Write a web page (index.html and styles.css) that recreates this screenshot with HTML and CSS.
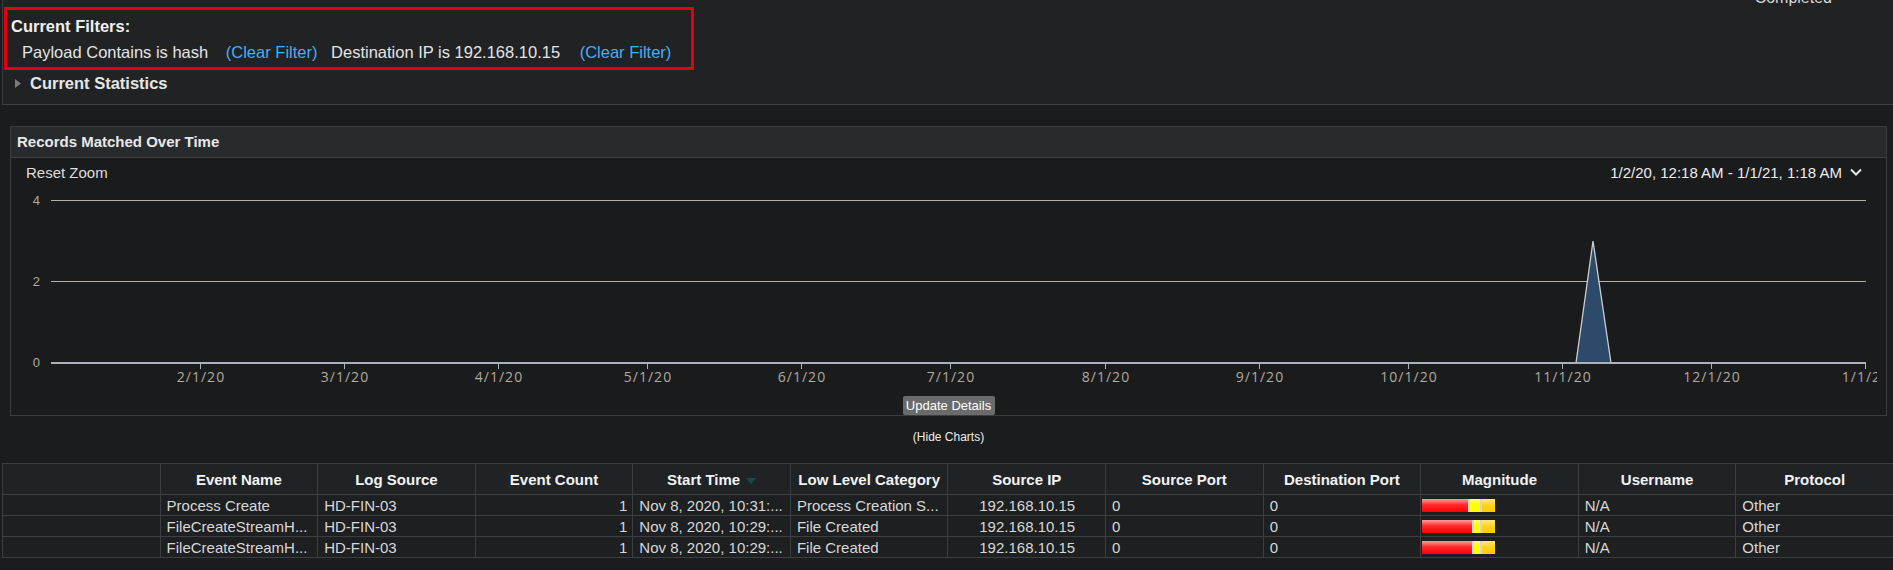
FILE: index.html
```html
<!DOCTYPE html>
<html>
<head>
<meta charset="utf-8">
<link rel="stylesheet" href="styles.css">
</head>
<body>
<div class="top-panel">
  <div class="status">Completed</div>
  <div class="filters-box">
    <div class="filters-title">Current Filters:</div>
    <div class="filters-line">
      <span class="f-text">Payload Contains is hash</span>
      <a class="clear c1">(Clear Filter)</a>
      <span class="f-text f2">Destination IP is 192.168.10.15</span>
      <a class="clear c2">(Clear Filter)</a>
    </div>
  </div>
  <div class="stats-row">
    <svg class="stats-arrow" width="6" height="9" viewBox="0 0 6 9"><polygon points="0,0 6,4.5 0,9" fill="#7c7c7c"/></svg>
    <span class="stats-title">Current Statistics</span>
  </div>
</div>

<div class="chart-panel">
  <div class="chart-header">Records Matched Over Time</div>
  <div class="chart-body">
    <div class="chart-toolbar">
      <span class="reset-zoom">Reset Zoom</span>
      <span class="range">1/2/20, 12:18 AM - 1/1/21, 1:18 AM
        <svg class="chev" width="12" height="8" viewBox="0 0 12 8"><polyline points="1,1.5 6,6.5 11,1.5" fill="none" stroke="#e6e6e6" stroke-width="2"/></svg>
      </span>
    </div>
    <svg class="plot" width="1866" height="210" viewBox="0 0 1866 210">
      <line class="grid" x1="40" y1="14.5" x2="1855" y2="14.5"/>
      <line class="grid" x1="40" y1="95.5" x2="1855" y2="95.5"/>
      <text class="ylab" x="29" y="18.5">4</text>
      <text class="ylab" x="29" y="99.5">2</text>
      <text class="ylab" x="29" y="180.5">0</text>
      <polygon points="1565,177 1582,55 1600,177" fill="#2e4a6b" stroke="#cdcdcd" stroke-width="1.3"/>
      <line class="axis" x1="40" y1="177" x2="1855" y2="177"/>
      <g class="ticks">
        <line x1="189.5" y1="178" x2="189.5" y2="183"/>
        <line x1="333.5" y1="178" x2="333.5" y2="183"/>
        <line x1="487.5" y1="178" x2="487.5" y2="183"/>
        <line x1="636.5" y1="178" x2="636.5" y2="183"/>
        <line x1="790.5" y1="178" x2="790.5" y2="183"/>
        <line x1="939.5" y1="178" x2="939.5" y2="183"/>
        <line x1="1094.5" y1="178" x2="1094.5" y2="183"/>
        <line x1="1248.5" y1="178" x2="1248.5" y2="183"/>
        <line x1="1397.5" y1="178" x2="1397.5" y2="183"/>
        <line x1="1551.5" y1="178" x2="1551.5" y2="183"/>
        <line x1="1700.5" y1="178" x2="1700.5" y2="183"/>
        <line x1="1854.5" y1="178" x2="1854.5" y2="183"/>
      </g>
      <g class="xlab">
        <text x="190" y="196">2/1/20</text>
        <text x="334" y="196">3/1/20</text>
        <text x="488" y="196">4/1/20</text>
        <text x="637" y="196">5/1/20</text>
        <text x="791" y="196">6/1/20</text>
        <text x="940" y="196">7/1/20</text>
        <text x="1095" y="196">8/1/20</text>
        <text x="1249" y="196">9/1/20</text>
        <text x="1398" y="196">10/1/20</text>
        <text x="1552" y="196">11/1/20</text>
        <text x="1701" y="196">12/1/20</text>
        <text x="1855" y="196">1/1/21</text>
      </g>
    </svg>
    <div class="update-btn">Update Details</div>
  </div>
</div>

<div class="hide-charts">(Hide Charts)</div>

<table class="events">
  <thead>
    <tr>
      <th></th>
      <th>Event Name</th>
      <th>Log Source</th>
      <th>Event Count</th>
      <th>Start Time<span class="sort"></span></th>
      <th>Low Level Category</th>
      <th>Source IP</th>
      <th>Source Port</th>
      <th>Destination Port</th>
      <th>Magnitude</th>
      <th>Username</th>
      <th>Protocol</th>
    </tr>
  </thead>
  <tbody>
    <tr>
      <td></td>
      <td>Process Create</td>
      <td>HD-FIN-03</td>
      <td class="num">1</td>
      <td>Nov 8, 2020, 10:31:...</td>
      <td>Process Creation S...</td>
      <td class="center">192.168.10.15</td>
      <td>0</td>
      <td>0</td>
      <td class="mag"><div class="magbar"><span class="m-red" style="width:46px"></span><span class="m-sep"></span><span class="m-yel" style="width:10px"></span><span class="m-sep"></span><span class="m-gold" style="width:13px"></span></div></td>
      <td>N/A</td>
      <td>Other</td>
    </tr>
    <tr>
      <td></td>
      <td>FileCreateStreamH...</td>
      <td>HD-FIN-03</td>
      <td class="num">1</td>
      <td>Nov 8, 2020, 10:29:...</td>
      <td>File Created</td>
      <td class="center">192.168.10.15</td>
      <td>0</td>
      <td>0</td>
      <td class="mag"><div class="magbar"><span class="m-red" style="width:50px"></span><span class="m-sep"></span><span class="m-yel" style="width:6px"></span><span class="m-sep"></span><span class="m-gold" style="width:13px"></span></div></td>
      <td>N/A</td>
      <td>Other</td>
    </tr>
    <tr>
      <td></td>
      <td>FileCreateStreamH...</td>
      <td>HD-FIN-03</td>
      <td class="num">1</td>
      <td>Nov 8, 2020, 10:29:...</td>
      <td>File Created</td>
      <td class="center">192.168.10.15</td>
      <td>0</td>
      <td>0</td>
      <td class="mag"><div class="magbar"><span class="m-red" style="width:50px"></span><span class="m-sep"></span><span class="m-yel" style="width:6px"></span><span class="m-sep"></span><span class="m-gold" style="width:13px"></span></div></td>
      <td>N/A</td>
      <td>Other</td>
    </tr>
  </tbody>
</table>
</body>
</html>
```

FILE: styles.css
```css
html, body {
  margin: 0;
  padding: 0;
}
body {
  background: #1b1c1e;
  font-family: "Liberation Sans", Arial, sans-serif;
  color: #dcdcdc;
  width: 1893px;
  height: 570px;
  overflow: hidden;
}

/* ---------- top panel ---------- */
.top-panel {
  display: flex;
  flex-direction: column;
  margin-left: 2px;
  height: 104px;
  background: #202224;
  border-left: 1px solid #3a3c3f;
  border-bottom: 1px solid #3e4043;
  overflow: hidden;
}
.status {
  height: 18px;
  line-height: 18px;
  margin-top: -11px;
  text-align: right;
  padding-right: 61px;
  font-size: 16px;
  color: #d8d8d8;
}
.filters-box {
  align-self: flex-start;
  box-sizing: border-box;
  width: 690px;
  height: 63px;
  margin-left: 1px;
  border: 3px solid #e3000b;
  padding: 7px 0 0 4px;
}
.filters-title {
  font-size: 16.5px;
  line-height: 19px;
  font-weight: bold;
  color: #f0f0f0;
}
.filters-line {
  margin-top: 7px;
  margin-left: 11px;
  font-size: 16.5px;
  line-height: 19px;
  white-space: nowrap;
  color: #e4e4e4;
}
.clear {
  color: #45aef5;
}
.c1 { margin-left: 13px; }
.f2 { margin-left: 9px; }
.c2 { margin-left: 15px; }

.stats-row {
  display: flex;
  align-items: center;
  margin-top: 3px;
  height: 20px;
}
.stats-arrow {
  margin-left: 12px;
  margin-right: 9px;
}
.stats-title {
  font-size: 16.5px;
  font-weight: bold;
  color: #e6e6e6;
}

/* ---------- chart panel ---------- */
.chart-panel {
  box-sizing: border-box;
  width: 1877px;
  margin: 21px 0 0 10px;
  border: 1px solid #3b3e41;
  background: #1a1b1d;
}
.chart-header {
  height: 30px;
  line-height: 30px;
  padding-left: 6px;
  background: #282b2e;
  border-bottom: 1px solid #3f4346;
  font-size: 15px;
  font-weight: bold;
  color: #e8e8e8;
}
.chart-body {
  height: 257px;
  display: flex;
  flex-direction: column;
}
.chart-toolbar {
  height: 28px;
  display: flex;
  align-items: center;
  justify-content: space-between;
  padding: 0 24px 0 15px;
  font-size: 15px;
  color: #dedede;
}
.range {
  display: flex;
  align-items: center;
  color: #ececec;
}
.chev {
  margin-left: 8px;
}
.plot {
  display: block;
  overflow: hidden;
}
.grid {
  stroke: #b4b1a9;
  stroke-width: 1;
}
.axis {
  stroke: #a9b1ba;
  stroke-width: 2;
}
.ticks line {
  stroke: #a9b1ba;
  stroke-width: 1;
}
.ylab {
  font-family: "Liberation Sans", Arial, sans-serif;
  font-size: 13px;
  fill: #aeaba5;
  text-anchor: end;
}
.xlab text {
  font-family: "Open Sans", sans-serif;
  font-size: 14px;
  letter-spacing: 1px;
  fill: #b1aa9e;
  text-anchor: middle;
}
.update-btn {
  align-self: center;
  width: 92px;
  height: 19px;
  line-height: 19px;
  text-align: center;
  background: #6b6b6b;
  border-radius: 2px;
  color: #ffffff;
  font-size: 13px;
}

.hide-charts {
  margin-top: 14px;
  height: 14px;
  line-height: 14px;
  text-align: center;
  font-size: 12px;
  color: #ececec;
  width: 1897px;
}

/* ---------- table ---------- */
.events {
  margin: 19px 0 0 2px;
  width: 1892px;
  table-layout: fixed;
  border-collapse: collapse;
  font-size: 15px;
  background: #1d1f21;
}
.events th, .events td {
  border: 1px solid #3c3f42;
  white-space: nowrap;
  overflow: hidden;
}
.events th {
  height: 30px;
  padding: 0 4px;
  background: #202326;
  color: #f2f2f2;
  font-weight: bold;
  text-align: center;
}
.events td {
  height: 20px;
  padding: 0 5px 0 6px;
  color: #d8d8d8;
  text-align: left;
}
.events td.num { text-align: right; }
.events td.center { text-align: center; }
.events td.mag { padding: 0 0 0 1px; }
.sort {
  display: inline-block;
  width: 0;
  height: 0;
  margin-left: 6px;
  border-left: 5px solid transparent;
  border-right: 5px solid transparent;
  border-top: 6px solid #124c4c;
  vertical-align: middle;
}
.magbar {
  display: flex;
  height: 13px;
  width: 73px;
}
.m-red {
  background: linear-gradient(#ff9d9d 0%, #ff2a2a 45%, #ff0000 100%);
}
.m-sep {
  width: 2px;
  background: #d6d6d6;
}
.m-yel {
  background: linear-gradient(#ffff80 0%, #ffff00 40%, #ffff00 100%);
}
.m-gold {
  background: linear-gradient(#ffe78a 0%, #ffd21a 50%, #ffcc00 100%);
}
```
